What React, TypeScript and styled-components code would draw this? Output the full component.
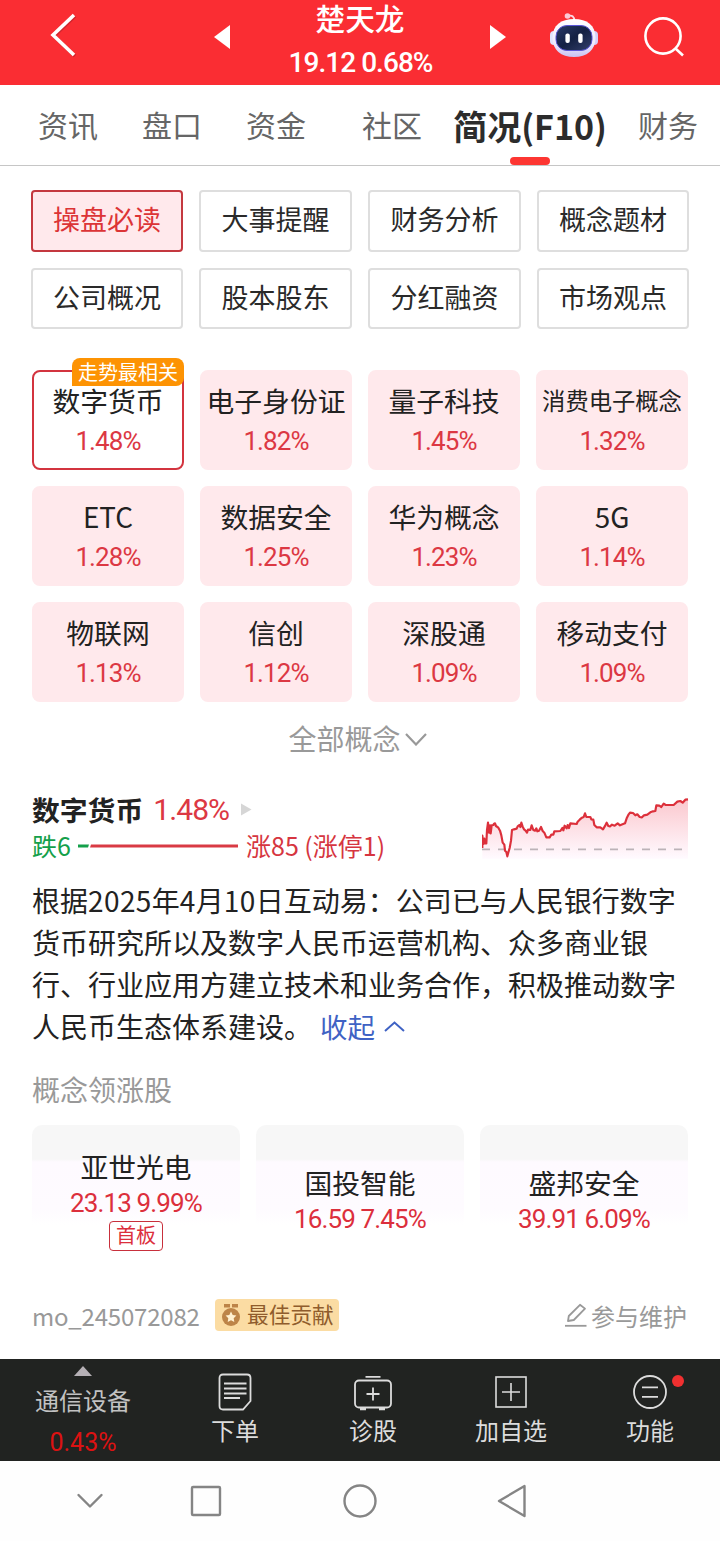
import React from "react";
import styled, { createGlobalStyle } from "styled-components";

const CJK = `"Noto Sans CJK SC", sans-serif`;
const NUM = `Roboto, "Noto Sans CJK SC", sans-serif`;

const GlobalStyle = createGlobalStyle`
  * { box-sizing: border-box; }
  body { margin: 0; background: #fff; font-family: ${CJK}; color: #222; }
  svg { display: block; flex: none; }
  button { margin: 0; padding: 0; border: 0; background: none; font: inherit; color: inherit; }
`;

const Page = styled.div`
  width: 720px;
  height: 1541px;
  display: flex;
  flex-direction: column;
  overflow: hidden;
  white-space: nowrap;
`;

/* Header */
const Header = styled.header`
  height: 85px;
  flex: none;
  background: #fa2d33;
  color: #fff;
  display: grid;
  grid-template-columns: 214px 292px 44px 48px 46px 40px;
  align-items: start;
`;
const BackButton = styled.button`
  padding: 13px 0 0 50px;
  justify-self: start;
`;
const StockSwitch = styled.div`
  display: flex;
  align-items: flex-start;
  justify-content: space-between;
  & > button { padding-top: 25px; }
`;
const StockTitle = styled.div`
  display: flex;
  flex-direction: column;
  align-items: center;
`;
const StockName = styled.div`
  font-family: ${NUM};
  font-size: 29.7px;
  font-weight: 500;
  line-height: 40px;
  height: 40px;
`;
const StockQuote = styled.div`
  font-family: ${NUM};
  font-size: 28px;
  font-weight: 500;
  line-height: 46px;
  letter-spacing: -0.95px;
  padding-left: 1px;
`;
const RobotButton = styled.button` grid-column: 4; padding-top: 12px; `;
const SearchButton = styled.button` grid-column: 6; padding-top: 16px; `;

/* Tabs */
const Tabs = styled.nav`
  height: 81px;
  flex: none;
  display: flex;
  padding-left: 38px;
  border-bottom: 1px solid #c6c6c6;
`;
const Tab = styled.div<{ $gap: number; $active?: boolean }>`
  position: relative;
  width: ${(p) => (p.$active ? 152 : 60)}px;
  margin-right: ${(p) => p.$gap}px;
  flex: none;
  display: flex;
  justify-content: center;
  line-height: ${(p) => (p.$active ? 81 : 78)}px;
  font-size: ${(p) => (p.$active ? 34 : 30)}px;
  font-weight: ${(p) => (p.$active ? 700 : 400)};
  color: ${(p) => (p.$active ? "#2c2c2c" : "#666")};
  &::after {
    content: "";
    display: ${(p) => (p.$active ? "block" : "none")};
    position: absolute;
    bottom: 0;
    left: 56px;
    width: 40px;
    height: 8px;
    border-radius: 4px;
    background: #fd3632;
  }
`;

/* Section buttons */
const SectionGrid = styled.div`
  display: grid;
  grid-template-columns: 152px 153px 153px 152px;
  grid-template-rows: 62px 61px;
  justify-content: space-between;
  row-gap: 16px;
  padding: 24px 31px 0;
`;
const SectionButton = styled.button<{ $active?: boolean }>`
  border: 2px solid ${(p) => (p.$active ? "#c4383f" : "#dedede")};
  border-radius: 4px;
  background: ${(p) => (p.$active ? "#ffe9ec" : "#fff")};
  color: ${(p) => (p.$active ? "#dc3436" : "#2a2a2a")};
  font-size: 27px;
  line-height: 54px;
  padding-bottom: 4px;
`;

/* Concept tiles */
const ConceptGrid = styled.div`
  display: grid;
  grid-template-columns: repeat(4, 152px);
  grid-auto-rows: 100px;
  gap: 16px;
  padding: 41px 32px 0;
`;
const ConceptTile = styled.div<{ $active?: boolean }>`
  position: relative;
  border-radius: 8px;
  border: 2px solid ${(p) => (p.$active ? "#d3343f" : "#ffe9ec")};
  background: ${(p) => (p.$active ? "#fff" : "#ffe9ec")};
  display: flex;
  flex-direction: column;
  align-items: center;
  padding-top: 8px;
`;
const ConceptName = styled.div<{ $small?: boolean }>`
  font-size: ${(p) => (p.$small ? 23.3 : 27.8)}px;
  line-height: 40px;
  height: 40px;
  color: #222;
`;
const ConceptChange = styled.div`
  font-family: ${NUM};
  font-size: 26px;
  line-height: 43px;
  letter-spacing: -0.9px;
  color: #dc3843;
`;
const HotBadge = styled.div`
  position: absolute;
  top: -14px;
  right: -2px;
  width: 112px;
  height: 28px;
  border-radius: 8px 8px 8px 0;
  background: #fd9303;
  color: #fff;
  font-size: 20px;
  line-height: 27px;
  text-align: center;
`;
const AllConcepts = styled.button`
  display: flex;
  align-items: center;
  align-self: center;
  gap: 4px;
  margin: 16px 5px 0 0;
  height: 40px;
  line-height: 40px;
  font-size: 28px;
  color: #999;
  & > svg { margin-top: 2px; }
`;

/* Concept detail */
const Detail = styled.section`
  display: flex;
  justify-content: space-between;
  height: 84px;
  margin-top: 29px;
  padding: 0 31px 0 32px;
`;
const DetailHead = styled.div`
  display: flex;
  align-items: center;
  height: 44px;
  gap: 11px;
`;
const DetailName = styled.h2`
  margin: 0;
  font-size: 27.8px;
  font-weight: 700;
  line-height: 40px;
`;
const DetailChange = styled.span`
  font-family: ${NUM};
  font-size: 30px;
  letter-spacing: -0.9px;
  line-height: 44px;
  padding-top: 2px;
  margin-left: -1px;
  color: #dc3843;
`;
const Breadth = styled.div`
  display: flex;
  align-items: center;
  height: 30px;
  font-size: 25px;
  & > span { line-height: 28px; padding-bottom: 2px; }
`;
const Falling = styled.span` color: #14a04a; width: 46px; `;
const Rising = styled.span` color: #d63540; margin-left: 8px; `;
const Chart = styled.div` padding-top: 10px; `;

const Reason = styled.p`
  margin: 8px 32px 0;
  font-size: 28px;
  line-height: 42px;
  color: #222;
  white-space: normal;
`;
const Digits = styled.span` letter-spacing: 0.4px; `;
const Collapse = styled.span`
  display: inline-flex;
  align-items: center;
  gap: 9px;
  margin-left: 8px;
  color: #3f62c4;
  font-size: 27.5px;
  line-height: 30px;
`;
const LeadersTitle = styled.div`
  margin: 22px 32px 0;
  font-size: 28px;
  line-height: 40px;
  color: #999;
`;
const Leaders = styled.div`
  display: grid;
  grid-template-columns: repeat(3, 208px);
  gap: 16px;
  margin-top: 16px;
  padding: 0 32px;
`;
const LeaderCard = styled.div`
  height: 150px;
  border-radius: 10px;
  background: linear-gradient(#f7f7f7 34px, #fefaff 37px, #fefbff 84px, #fff 100px);
  display: flex;
  flex-direction: column;
  align-items: center;
  justify-content: center;
`;
const LeaderName = styled.div`
  font-size: 27.8px;
  line-height: 38px;
`;
const LeaderQuote = styled.div`
  font-family: ${NUM};
  font-size: 26px;
  line-height: 36px;
  letter-spacing: -0.85px;
  color: #dc2f3c;
`;
const BoardTag = styled.div`
  width: 54px;
  height: 30px;
  margin-bottom: 2px;
  border: 1.5px solid #c8303c;
  border-radius: 4px;
  font-size: 20px;
  line-height: 26px;
  text-align: center;
  color: #dc2f3c;
`;

const Contributor = styled.div`
  display: flex;
  align-items: center;
  height: 36px;
  margin-top: 22px;
  padding: 0 33px 0 32px;
  color: #999;
`;
const UserName = styled.span`
  width: 183px;
  font-size: 24px;
  letter-spacing: -0.2px;
`;
const AwardBadge = styled.div`
  display: flex;
  align-items: center;
  gap: 6px;
  width: 124px;
  height: 32px;
  padding-left: 6px;
  border-radius: 4px;
  background: #fbdca3;
  color: #8f5c2c;
  font-size: 21.7px;
  line-height: 28px;
  & > span { padding-bottom: 3px; }
`;
const EditLink = styled.div`
  display: flex;
  align-items: center;
  gap: 4px;
  margin-left: auto;
  font-size: 24px;
`;

/* Bottom bars */
const Toolbar = styled.footer`
  display: grid;
  grid-template-columns: 166px 138px 138px 138px 140px;
  height: 102px;
  margin-top: auto;
  flex: none;
  background: #212321;
  color: #dcdcdc;
`;
const Sector = styled.div`
  display: flex;
  flex-direction: column;
  align-items: center;
  padding-top: 7px;
  font-size: 24px;
  line-height: 47px;
  color: #c2c2c2;
`;
const SectorChange = styled.span`
  font-family: ${NUM};
  font-size: 25px;
  line-height: 39px;
  color: #dc1212;
`;
const ToolItem = styled.button`
  position: relative;
  display: flex;
  flex-direction: column;
  align-items: center;
  padding-top: 13px;
  font-size: 24px;
  line-height: 40px;
  & > svg { margin-bottom: -2px; }
`;
const Dot = styled.i`
  position: absolute;
  top: 16px;
  left: 92px;
  width: 12px;
  height: 12px;
  border-radius: 50%;
  background: #f03030;
`;
const SystemNav = styled.div`
  display: flex;
  align-items: center;
  height: 80px;
  flex: none;
  padding-left: 76px;
  background: #fefefe;
`;

const RobotIcon = () => (
  <svg width="48" height="46" viewBox="0 0 48 46">
    <defs>
      <linearGradient id="shell" x1="0" y1="0" x2="0" y2="1">
        <stop offset="0" stopColor="#fff" />
        <stop offset="0.65" stopColor="#eee9fd" />
        <stop offset="1" stopColor="#c9c2f2" />
      </linearGradient>
      <linearGradient id="visor" x1="0" y1="0" x2="1" y2="1">
        <stop offset="0" stopColor="#2a3a68" />
        <stop offset="0.5" stopColor="#142143" />
        <stop offset="1" stopColor="#34406c" />
      </linearGradient>
    </defs>
    <path d="M18 4Q24 2 24.5 9" fill="none" stroke="#fcd9e4" strokeWidth="1.8" />
    <circle cx="17.5" cy="4" r="2.8" fill="#fbc9d6" />
    <rect x="0" y="19" width="8" height="14" rx="4" fill="#dfe3fd" />
    <rect x="40" y="19" width="8" height="14" rx="4" fill="#d5cff9" />
    <path d="M24 7C37 7 45.500 13 45.500 26C45.500 38 37 45 24 45C11 45 2.500 38 2.500 26C2.500 13 11 7 24 7Z" fill="url(#shell)" />
    <rect x="6" y="13.5" width="36" height="25" rx="11" fill="url(#visor)" stroke="#5a55d6" strokeWidth="1" />
    <rect x="15.4" y="21.5" width="4.4" height="9.5" rx="2" fill="#fff" />
    <rect x="28.2" y="21.5" width="4.4" height="9.5" rx="2" fill="#fff" />
  </svg>
);

const MedalIcon = () => (
  <svg width="20" height="24" viewBox="0 0 20 24">
    <path d="M3 1H9V4.5H3ZM11 1H17V4.5H11Z" fill="#bd8448" />
    <circle cx="10" cy="14" r="9" fill="#bd8448" />
    <path d="M10 8.6L11.7 12L15.4 12.6L12.7 15.2L13.3 19L10 17.2L6.7 19L7.3 15.2L4.6 12.6L8.3 12Z" fill="#fff0d0" />
  </svg>
);

const LINE =
  "37,206 37,169 40,194 43,178 45,192 49,192 51,152 54,130 57,160 60,138 62,162 65,138 70,137 72,133 75,132 78,140 85,145 90,154 94,168 98,190 103,196 105,214 109,218 112,231 116,216 119,206 123,184 126,152 132,150 140,148 143,141 148,137 151,143 154,130 158,142 162,150 166,153 171,160 174,151 181,152 185,138 190,152 195,154 199,147 202,156 207,154 213,143 218,155 223,160 229,174 239,174 244,166 250,166 253,156 271,155 277,146 280,153 284,139 290,147 293,137 297,146 301,132 320,134 323,127 329,121 336,115 341,113 345,102 349,113 361,113 364,120 370,121 373,137 380,144 391,144 399,150 406,138 410,130 415,140 420,141 426,136 434,139 443,132 450,138 465,132 470,117 476,105 480,100 489,101 496,108 502,105 509,113 516,114 522,108 532,106 541,99 549,96 556,95 559,78 568,79 574,83 581,73 587,77 611,77 622,67 631,65 638,70 646,61 654,60";

const TrendChart = () => (
  <svg width="207" height="62" viewBox="36 53 621 186">
    <defs>
      <linearGradient id="area" x1="0" y1="0" x2="0" y2="1">
        <stop offset="0" stopColor="#fbc8ce" />
        <stop offset="1" stopColor="#fffaff" />
      </linearGradient>
    </defs>
    <polygon points={`${LINE} 654,238 37,238`} fill="url(#area)" />
    <path d="M36 210H640" stroke="#bcb3b8" strokeWidth="5" strokeDasharray="24 24" />
    <polyline points={LINE} fill="none" stroke="#dc303b" strokeWidth="6.5" strokeLinejoin="round" />
  </svg>
);

const tabs: [string, number][] = [
  ["资讯", 44], ["盘口", 44], ["资金", 56], ["社区", 32], ["简况(F10)", 32], ["财务", 0],
];
const sections = ["操盘必读", "大事提醒", "财务分析", "概念题材", "公司概况", "股本股东", "分红融资", "市场观点"];
const concepts: [string, string][] = [
  ["数字货币", "1.48%"], ["电子身份证", "1.82%"], ["量子科技", "1.45%"], ["消费电子概念", "1.32%"],
  ["ETC", "1.28%"], ["数据安全", "1.25%"], ["华为概念", "1.23%"], ["5G", "1.14%"],
  ["物联网", "1.13%"], ["信创", "1.12%"], ["深股通", "1.09%"], ["移动支付", "1.09%"],
];
const leaders = [
  { name: "亚世光电", quote: "23.13 9.99%", tag: "首板" },
  { name: "国投智能", quote: "16.59 7.45%" },
  { name: "盛邦安全", quote: "39.91 6.09%" },
];

export default function App() {
  return (
    <>
      <GlobalStyle />
      <Page>
        <Header>
          <BackButton>
            <svg width="28" height="46" viewBox="0 0 28 46" fill="none">
              <path d="M25 3L4 23L25 43" stroke="#b5202a" strokeWidth="3.6" opacity="0.6" />
              <path d="M24 2L3 22L24 42" stroke="#fff" strokeWidth="3.6" />
            </svg>
          </BackButton>
          <StockSwitch>
            <button>
              <svg width="16" height="24" viewBox="0 0 16 24"><path d="M16 0V24L0 12Z" fill="#fff" /></svg>
            </button>
            <StockTitle>
              <StockName>楚天龙</StockName>
              <StockQuote>19.12 0.68%</StockQuote>
            </StockTitle>
            <button>
              <svg width="16" height="24" viewBox="0 0 16 24"><path d="M0 0V24L16 12Z" fill="#fff" /></svg>
            </button>
          </StockSwitch>
          <RobotButton><RobotIcon /></RobotButton>
          <SearchButton>
            <svg width="40" height="41" viewBox="0 0 40 41" fill="none" stroke="#fff" strokeWidth="2.6">
              <circle cx="19" cy="20" r="17.6" />
              <path d="M31 32L39 39.5" />
            </svg>
          </SearchButton>
        </Header>

        <Tabs>
          {tabs.map(([label, gap]) => (
            <Tab key={label} $gap={gap} $active={label === "简况(F10)"}>{label}</Tab>
          ))}
        </Tabs>

        <SectionGrid>
          {sections.map((s, i) => <SectionButton key={s} $active={i === 0}>{s}</SectionButton>)}
        </SectionGrid>

        <ConceptGrid>
          {concepts.map(([name, change], i) => (
            <ConceptTile key={name} $active={i === 0}>
              {i === 0 && <HotBadge>走势最相关</HotBadge>}
              <ConceptName $small={name.length > 5}>{name}</ConceptName>
              <ConceptChange>{change}</ConceptChange>
            </ConceptTile>
          ))}
        </ConceptGrid>

        <AllConcepts>
          全部概念
          <svg width="22" height="13" viewBox="0 0 22 13" fill="none" stroke="#999" strokeWidth="2.2">
            <path d="M1 1L11 11.5L21 1" />
          </svg>
        </AllConcepts>

        <Detail>
          <div>
            <DetailHead>
              <DetailName>数字货币</DetailName>
              <DetailChange>1.48%</DetailChange>
              <svg width="12" height="13" viewBox="0 0 12 13"><path d="M1 0.5L11.5 6.5L1 12.5Z" fill="#d6d6d6" /></svg>
            </DetailHead>
            <Breadth>
              <Falling>跌6</Falling>
              <svg width="160" height="4" viewBox="0 0 160 4">
                <path d="M0 0.5H11L10 3.5H0Z" fill="#14a04a" />
                <path d="M13 0.5H160V3.5H12Z" fill="#d93a44" />
              </svg>
              <Rising>涨85 (涨停1)</Rising>
            </Breadth>
          </div>
          <Chart><TrendChart /></Chart>
        </Detail>

        <Reason>
          根据<Digits>2025</Digits>年<Digits>4</Digits>月<Digits>10</Digits>日互动易：公司已与人民银行数字货币研究所以及数字人民币运营机构、众多商业银行、行业应用方建立技术和业务合作，积极推动数字人民币生态体系建设。
          <Collapse>
            收起
            <svg width="21" height="11" viewBox="0 0 21 11" fill="none" stroke="#3f62c4" strokeWidth="2">
              <path d="M1 10L10.5 1.5L20 10" />
            </svg>
          </Collapse>
        </Reason>

        <LeadersTitle>概念领涨股</LeadersTitle>
        <Leaders>
          {leaders.map((l) => (
            <LeaderCard key={l.name}>
              <LeaderName>{l.name}</LeaderName>
              <LeaderQuote>{l.quote}</LeaderQuote>
              {l.tag && <BoardTag>{l.tag}</BoardTag>}
            </LeaderCard>
          ))}
        </Leaders>

        <Contributor>
          <UserName>mo_245072082</UserName>
          <AwardBadge><MedalIcon /><span>最佳贡献</span></AwardBadge>
          <EditLink>
            <svg width="22" height="24" viewBox="0 0 22 24" fill="none" stroke="#999" strokeWidth="1.8">
              <path d="M3 18L3.8 13L15 1.8L20 5.6L8.8 17L3 18Z" strokeLinejoin="round" />
              <path d="M0 22.8H21.5" />
            </svg>
            参与维护
          </EditLink>
        </Contributor>

        <Toolbar>
          <Sector>
            <svg width="18" height="10" viewBox="0 0 18 10"><path d="M9 0L18 10H0Z" fill="#b5b0b5" /></svg>
            通信设备
            <SectorChange>0.43%</SectorChange>
          </Sector>
          <ToolItem>
            <svg width="34" height="40" viewBox="0 0 34 40" fill="none" stroke="#dcdcdc" strokeWidth="1.8">
              <path d="M5 2.5H29Q32.5 2.5 32.5 6V29L25 37.5H5Q1.5 37.5 1.5 34V6Q1.5 2.5 5 2.5ZM32.5 29L25 37.5" />
              <path d="M6 11.5H28.5M6 16.5H28.5M6 21.5H28.5M6 26H22" />
            </svg>
            下单
          </ToolItem>
          <ToolItem>
            <svg width="38" height="40" viewBox="0 0 38 40" fill="none" stroke="#dcdcdc" strokeWidth="1.8">
              <rect x="1" y="8.5" width="36" height="27" rx="4" />
              <path d="M11.5 4.8H26.5M19 15.5V28.5M12.5 22H25.5" />
              <path d="M6 37H12M25 37H31" strokeWidth="2.4" />
            </svg>
            诊股
          </ToolItem>
          <ToolItem>
            <svg width="32" height="40" viewBox="0 0 32 40" fill="none" stroke="#dcdcdc" strokeWidth="1.6">
              <rect x="1" y="5" width="30" height="30" />
              <path d="M16 11V29M7 20H25" />
            </svg>
            加自选
          </ToolItem>
          <ToolItem>
            <svg width="36" height="40" viewBox="0 0 36 40" fill="none" stroke="#dcdcdc" strokeWidth="1.8">
              <circle cx="18" cy="20" r="16" />
              <path d="M10 15.3H26M10 24.8H26" />
            </svg>
            功能
            <Dot />
          </ToolItem>
        </Toolbar>

        <SystemNav>
          <svg width="450" height="40" viewBox="76 1481 450 40" fill="none" stroke="#858585" strokeWidth="2.4" strokeLinejoin="round" strokeLinecap="round">
            <path d="M78.5 1495L90 1506.5L101.500 1495" />
            <rect x="192" y="1487" width="28" height="28" rx="1" />
            <circle cx="360" cy="1501" r="15.500" />
            <path d="M524.500 1486V1516L499 1501Z" />
          </svg>
        </SystemNav>
      </Page>
    </>
  );
}
